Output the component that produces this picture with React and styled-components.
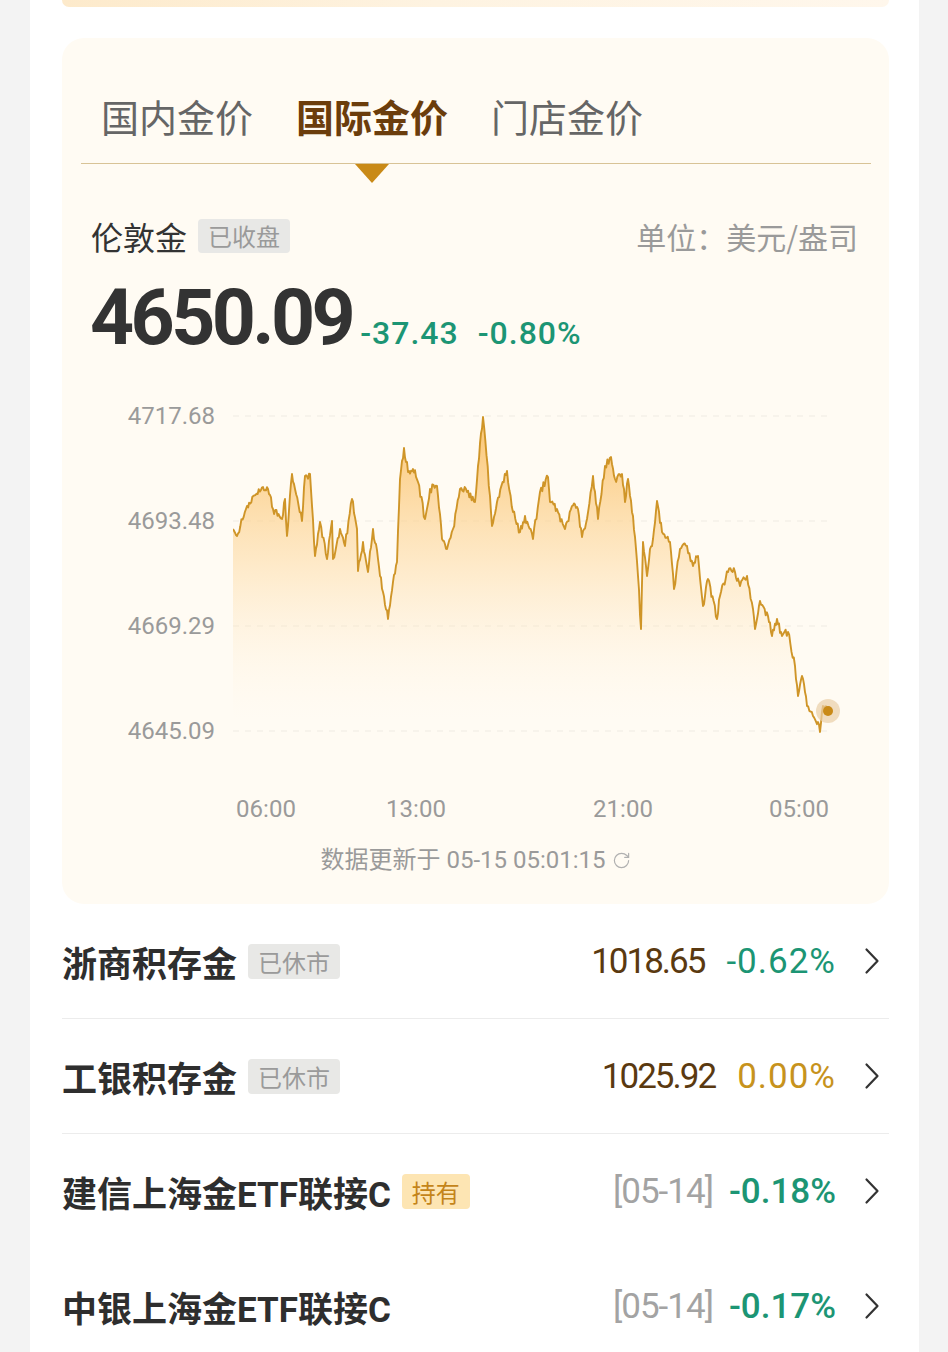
import React from "react";
import styled, { createGlobalStyle } from "styled-components";
import { RotateCw } from "lucide-react";

const GlobalStyle = createGlobalStyle`
  html, body {
    margin: 0;
    padding: 0;
    background: #f3f3f3;
  }
  body {
    font-family: Roboto, "Noto Sans CJK SC", sans-serif;
  }
`;

const Page = styled.div`
  width: 948px;
  height: 1352px;
  overflow: hidden;
  background: #f3f3f3;
`;

const Panel = styled.div`
  margin-left: 30px;
  width: 889px;
  height: 100%;
  box-sizing: border-box;
  padding: 0 30px 0 32px;
  background: #fff;
`;

const PrevCard = styled.div`
  height: 7px;
  border-radius: 0 0 18px 18px;
  background: linear-gradient(90deg, #fdeacb 0%, #fef3e1 45%, #fff7ec 100%);
`;

const Card = styled.div`
  margin-top: 31px;
  padding-bottom: 29px;
  border-radius: 22px;
  background: #fffbf3;
`;

const TabBar = styled.div`
  display: flex;
  gap: 43px;
  margin: 0 18px 0 19px;
  padding: 53px 0 22px 20px;
  border-bottom: 1px solid #d8c396;
`;

const Tab = styled.div`
  position: relative;
  font-family: "Noto Sans CJK SC", sans-serif;
  font-size: 38px;
  line-height: 50px;
  font-weight: ${(p) => (p.$active ? 700 : 400)};
  color: ${(p) => (p.$active ? "#6b3d0c" : "#666")};

  &::after {
    content: "";
    display: ${(p) => (p.$active ? "block" : "none")};
    position: absolute;
    left: 50%;
    top: calc(100% + 23px);
    margin-left: -17px;
    border-left: 17px solid transparent;
    border-right: 17px solid transparent;
    border-top: 19px solid #c98a17;
  }
`;

const HeaderRow = styled.div`
  display: flex;
  align-items: center;
  margin-top: 52px;
  padding: 0 31px 0 29px;
  height: 40px;
`;

const Market = styled.div`
  font-family: "Noto Sans CJK SC", sans-serif;
  font-size: 32px;
  color: #333;
`;

const Badge = styled.span`
  display: inline-block;
  margin-left: 11px;
  height: ${(p) => p.$h || 35}px;
  line-height: ${(p) => p.$h || 35}px;
  padding: 0 10px;
  border-radius: 4px;
  font-family: "Noto Sans CJK SC", sans-serif;
  font-size: 24px;
  font-weight: 400;
  background: ${(p) => (p.$hold ? "#fde5b3" : "#e8e8e6")};
  color: ${(p) => (p.$hold ? "#c4841a" : "#9a9a9a")};
`;

const Unit = styled.div`
  margin-left: auto;
  font-family: "Noto Sans CJK SC", sans-serif;
  font-size: 30px;
  color: #9a9a9a;
`;

const PriceRow = styled.div`
  display: flex;
  align-items: baseline;
  margin-top: 24px;
  padding-left: 28px;
  height: 77px;
`;

const BigPrice = styled.div`
  font-family: Roboto, sans-serif;
  font-size: 77px;
  line-height: 77px;
  font-weight: 700;
  letter-spacing: -3.6px;
  color: #333;
`;

const Delta = styled.span`
  margin-left: ${(p) => p.$gap}px;
  font-family: Roboto, sans-serif;
  font-size: 32px;
  font-weight: 500;
  letter-spacing: 1px;
  color: #1c9574;
`;

const ChartGrid = styled.div`
  display: grid;
  grid-template-columns: 153px 617px;
  column-gap: 18px;
  align-items: start;
  margin-top: 44px;
`;

const YAxis = styled.div`
  display: flex;
  flex-direction: column;
  justify-content: space-between;
  height: 345px;
  text-align: right;
`;

const YLabel = styled.div`
  font-family: Roboto, sans-serif;
  font-size: 24px;
  line-height: 30px;
  color: #9a9a9a;
`;

const Updated = styled.div`
  display: flex;
  align-items: center;
  justify-content: center;
  gap: 6px;
  margin-top: 19px;
  font-family: Roboto, "Noto Sans CJK SC", sans-serif;
  font-size: 24px;
  line-height: 30px;
  color: #9a9a9a;
`;

const List = styled.div`
  display: flex;
  flex-direction: column;
`;

const Row = styled.div`
  display: flex;
  align-items: center;
  height: 114px;
  padding-right: 9px;
  border-bottom: 1px solid ${(p) => (p.$divider ? "#ececec" : "transparent")};
`;

const Name = styled.div`
  font-family: Roboto, "Noto Sans CJK SC", sans-serif;
  font-size: 35px;
  font-weight: 700;
  color: #2e2e2e;
`;

const Right = styled.div`
  display: flex;
  align-items: center;
  margin-left: auto;
  font-family: Roboto, sans-serif;
  font-size: 35px;
`;

const Value = styled.span`
  margin-right: ${(p) => p.$after}px;
  color: ${(p) => p.$color};
  font-weight: ${(p) => p.$weight || 400};
  letter-spacing: ${(p) => p.$spacing || 0}px;
`;

const Chevron = styled.svg`
  width: 16px;
  height: 28px;
`;

/* price series: key points traced from the chart, with jitter in between */
const KEY = [
  [233, 530], [237, 537], [247, 507], [263, 488], [268, 490], [273, 510], [282, 520],
  [285, 500], [287, 537], [292, 475], [295, 490], [302, 522], [305, 477], [310, 475],
  [315, 557], [320, 523], [327, 560], [332, 522], [333, 560], [340, 530], [345, 547],
  [352, 500], [357, 530], [358, 572], [363, 543], [368, 573], [373, 530], [378, 560],
  [383, 593], [388, 620], [393, 583], [397, 563], [400, 480], [404, 449], [408, 473],
  [413, 470], [418, 483], [425, 520], [430, 490], [437, 487], [442, 540], [447, 550],
  [453, 530], [460, 490], [467, 493], [475, 503], [478, 467], [483, 418], [490, 497],
  [492, 527], [497, 503], [507, 472], [513, 513], [520, 533], [525, 517], [533, 540],
  [540, 493], [548, 478], [550, 503], [557, 510], [565, 530], [572, 507], [577, 508],
  [582, 538], [587, 520], [593, 477], [598, 520], [605, 467], [611, 458], [615, 480],
  [622, 475], [625, 503], [628, 480], [633, 517], [638, 577], [641, 630], [643, 543],
  [647, 577], [650, 550], [653, 540], [657, 502], [662, 533], [670, 543], [674, 590],
  [680, 550], [687, 547], [693, 567], [698, 557], [703, 607], [708, 580], [717, 620],
  [720, 597], [728, 573], [735, 573], [740, 587], [747, 577], [753, 610], [755, 630],
  [760, 602], [768, 617], [772, 637], [777, 620], [782, 637], [788, 633], [795, 667],
  [798, 697], [802, 677], [807, 707], [813, 717], [818, 723], [820, 733], [823, 707],
  [828, 712],
];

function seeded(a) {
  return function () {
    a |= 0;
    a = (a + 0x6d2b79f5) | 0;
    let t = Math.imul(a ^ (a >>> 15), 1 | a);
    t = (t + Math.imul(t ^ (t >>> 7), 61 | t)) ^ t;
    return ((t ^ (t >>> 14)) >>> 0) / 4294967296;
  };
}

const X0 = 233;
const Y0 = 402;

function buildSeries() {
  const rnd = seeded(11);
  const pts = [];
  for (let i = 0; i < KEY.length - 1; i++) {
    const [xa, ya] = KEY[i];
    const [xb, yb] = KEY[i + 1];
    const n = Math.max(1, Math.round((xb - xa) / 1.1));
    for (let k = 0; k < n; k++) {
      const t = k / n;
      const jitter = k === 0 ? 0 : (rnd() - 0.5) * 8;
      pts.push([xa + (xb - xa) * t - X0, ya + (yb - ya) * t + jitter - Y0]);
    }
  }
  const last = KEY[KEY.length - 1];
  pts.push([last[0] - X0, last[1] - Y0]);
  return pts;
}

const SERIES = buildSeries();
const LINE = SERIES.map((p, i) => `${i ? "L" : "M"}${p[0].toFixed(1)} ${p[1].toFixed(1)}`).join(" ");
const AREA = `${LINE} L${SERIES[SERIES.length - 1][0].toFixed(1)} 330 L0 330 Z`;

const GRID = [15, 120, 225, 330];
const Y_LABELS = ["4717.68", "4693.48", "4669.29", "4645.09"];
const X_LABELS = [
  ["06:00", 33],
  ["13:00", 183],
  ["21:00", 390],
  ["05:00", 566],
];

function PriceChart() {
  const end = SERIES[SERIES.length - 1];
  return (
    <svg width="617" height="425" viewBox="0 0 617 425">
      <defs>
        <linearGradient id="goldFill" x1="0" y1="40" x2="0" y2="320" gradientUnits="userSpaceOnUse">
          <stop offset="0" stopColor="#fbc674" stopOpacity="0.9" />
          <stop offset="0.45" stopColor="#fdd9a0" stopOpacity="0.5" />
          <stop offset="1" stopColor="#fff3e0" stopOpacity="0" />
        </linearGradient>
      </defs>
      {GRID.map((y) => (
        <line key={y} x1="0" x2="597" y1={y} y2={y} stroke="#efebe3" strokeWidth="1" strokeDasharray="6 6" />
      ))}
      <path d={AREA} fill="url(#goldFill)" />
      <path d={LINE} fill="none" stroke="#cf9528" strokeWidth="1.9" strokeLinejoin="round" />
      <circle cx={end[0]} cy={end[1]} r="12" fill="#e9cfa6" opacity="0.7" />
      <circle cx={end[0]} cy={end[1]} r="5" fill="#c98a17" />
      {X_LABELS.map(([t, x]) => (
        <text key={t} x={x} y="416" textAnchor="middle" fontFamily="Roboto, sans-serif" fontSize="24" fill="#9a9a9a">
          {t}
        </text>
      ))}
    </svg>
  );
}

const ROWS = [
  {
    name: "浙商积存金",
    badge: "已休市",
    left: { text: "1018.65", color: "#5a3910", spacing: -2, after: 22 },
    change: { text: "-0.62%", color: "#1c9574", spacing: 1 },
    divider: true,
  },
  {
    name: "工银积存金",
    badge: "已休市",
    left: { text: "1025.92", color: "#5a3910", spacing: -2, after: 22 },
    change: { text: "0.00%", color: "#c7931d", spacing: 1 },
    divider: true,
  },
  {
    name: "建信上海金ETF联接C",
    badge: "持有",
    hold: true,
    left: { text: "[05-14]", color: "#a3a3a3", spacing: -1, after: 16 },
    change: { text: "-0.18%", color: "#1c9574", weight: 500, spacing: 0 },
  },
  {
    name: "中银上海金ETF联接C",
    left: { text: "[05-14]", color: "#a3a3a3", spacing: -1, after: 16 },
    change: { text: "-0.17%", color: "#1c9574", weight: 500, spacing: 0 },
  },
];

function FundRow({ row }) {
  return (
    <Row $divider={row.divider}>
      <Name>{row.name}</Name>
      {row.badge && <Badge $hold={row.hold}>{row.badge}</Badge>}
      <Right>
        <Value $color={row.left.color} $spacing={row.left.spacing} $after={row.left.after}>
          {row.left.text}
        </Value>
        <Value $color={row.change.color} $weight={row.change.weight} $spacing={row.change.spacing} $after={28}>
          {row.change.text}
        </Value>
        <Chevron viewBox="0 0 16 28">
          <path d="M2.5 2.5 L13.5 14 L2.5 25.5" fill="none" stroke="#333" strokeWidth="2.2" strokeLinecap="round" strokeLinejoin="round" />
        </Chevron>
      </Right>
    </Row>
  );
}

export default function App() {
  return (
    <Page>
      <GlobalStyle />
      <Panel>
        <PrevCard />
        <Card>
          <TabBar>
            <Tab>国内金价</Tab>
            <Tab $active>国际金价</Tab>
            <Tab>门店金价</Tab>
          </TabBar>
          <HeaderRow>
            <Market>伦敦金</Market>
            <Badge $h={34}>已收盘</Badge>
            <Unit>单位：美元/盎司</Unit>
          </HeaderRow>
          <PriceRow>
            <BigPrice>4650.09</BigPrice>
            <Delta $gap={8}>-37.43</Delta>
            <Delta $gap={19}>-0.80%</Delta>
          </PriceRow>
          <ChartGrid>
            <YAxis>
              {Y_LABELS.map((l) => (
                <YLabel key={l}>{l}</YLabel>
              ))}
            </YAxis>
            <PriceChart />
          </ChartGrid>
          <Updated>
            数据更新于 05-15 05:01:15
            <RotateCw size={19} strokeWidth={1.5} color="#b0b0b0" />
          </Updated>
        </Card>
        <List>
          {ROWS.map((r) => (
            <FundRow key={r.name} row={r} />
          ))}
        </List>
      </Panel>
    </Page>
  );
}
